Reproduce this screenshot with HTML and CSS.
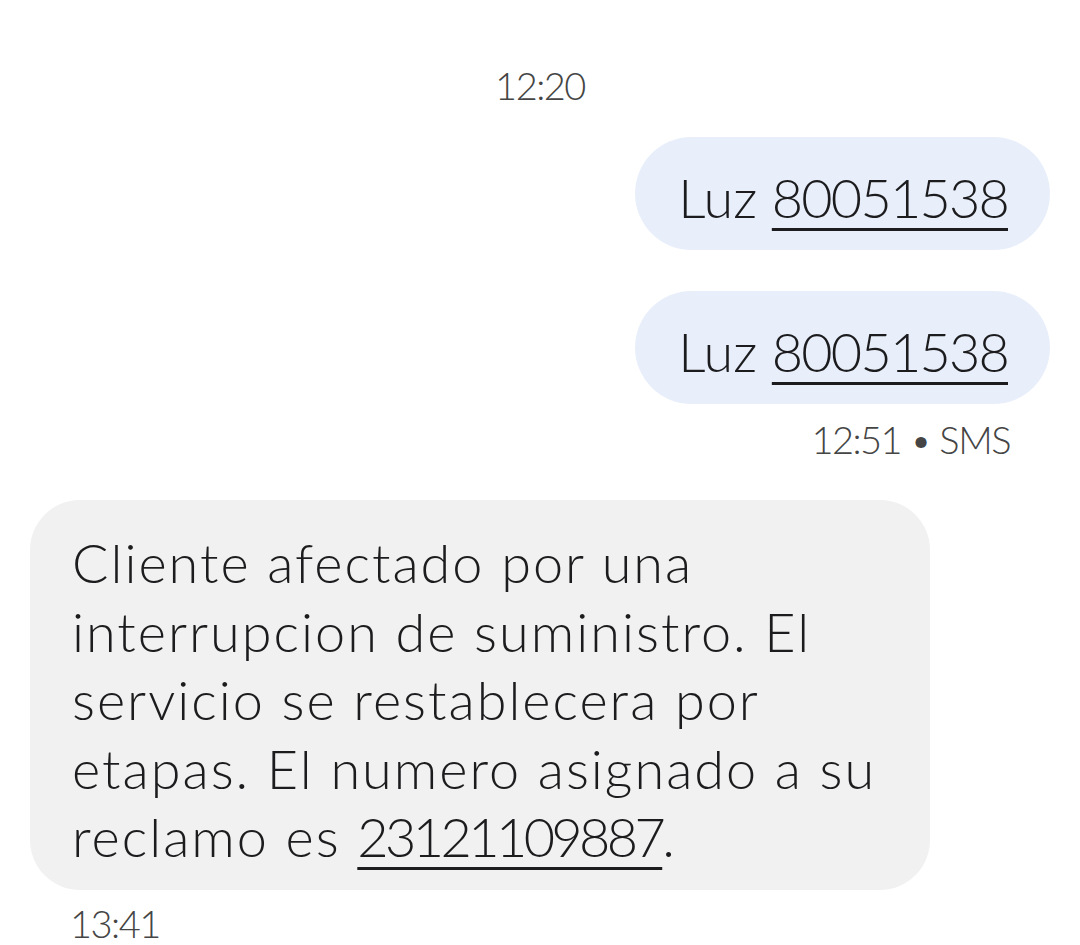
FILE: index.html
```html
<!DOCTYPE html>
<html lang="es">
<head>
<meta charset="utf-8">
<title>Mensajes</title>
<link rel="stylesheet" href="styles.css">
</head>
<body>
<main class="thread">
  <div class="stamp stamp-center">12:20</div>
  <div class="row row-out">
    <div class="bubble bubble-out">Luz <span class="link">80051538</span></div>
  </div>
  <div class="row row-out">
    <div class="bubble bubble-out">Luz <span class="link">80051538</span></div>
  </div>
  <div class="stamp stamp-right">12:51 • SMS</div>
  <div class="row row-in">
    <div class="bubble bubble-in">Cliente afectado por una<br>interrupcion de suministro. El<br>servicio se restablecera por<br>etapas. El numero asignado a su<br>reclamo es <span class="link link-long">23121109887</span>.</div>
  </div>
  <div class="stamp stamp-left">13:41</div>
</main>
</body>
</html>
```

FILE: styles.css
```css
html, body {
  margin: 0;
  padding: 0;
  background: #ffffff;
}
body {
  font-family: "Lato", "Noto Sans", sans-serif;
  font-weight: 300;
  color: #1c1c1e;
  width: 1080px;
  height: 945px;
  overflow: hidden;
}
.thread {
  display: flex;
  flex-direction: column;
  padding: 60px 30px 0 30px;
}
.stamp {
  font-size: 38px;
  line-height: 50px;
  color: #454545;
  letter-spacing: -1.5px;
}
.stamp-center {
  text-align: center;
  margin-bottom: 27px;
}
.stamp-right {
  text-align: right;
  padding-right: 40px;
  margin-top: 10px;
  margin-bottom: 36px;
}
.stamp-left {
  padding-left: 40px;
  margin-top: 8px;
}
.row {
  display: flex;
}
.row-out {
  justify-content: flex-end;
}
.row-out + .row-out {
  margin-top: 41px;
}
.bubble {
  font-size: 54px;
  line-height: 68px;
}
.bubble-out {
  background: #e8effb;
  border-radius: 57px;
  padding: 27px 42px 18px 43px;
  height: 68px;
}
.bubble-in {
  background: #f1f1f1;
  border-radius: 50px;
  width: 816px;
  padding: 29px 42px 18px 42px;
  line-height: 68.5px;
  letter-spacing: 2px;
}
.link {
  text-decoration: underline;
  text-decoration-thickness: 3px;
  text-underline-offset: 10px;
  letter-spacing: -1.8px;
}
.link-long {
  letter-spacing: -3.6px;
}
```
